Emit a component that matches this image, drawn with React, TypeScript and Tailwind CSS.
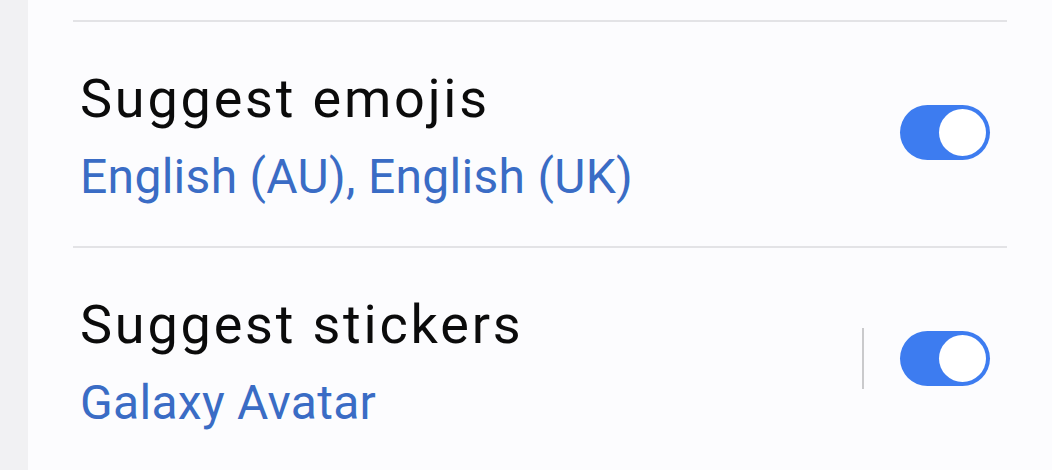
type SettingRow = {
  title: string;
  summary: string;
  enabled: boolean;
  hasAction?: boolean;
};

const rows: SettingRow[] = [
  { title: 'Suggest emojis', summary: 'English (AU), English (UK)', enabled: true },
  { title: 'Suggest stickers', summary: 'Galaxy Avatar', enabled: true, hasAction: true },
];

function Toggle({ on }: { on: boolean }) {
  return (
    <div
      className={`flex h-[55px] w-[90px] items-center rounded-full px-[4px] ${
        on ? 'justify-end bg-[#3d7cf0]' : 'justify-start bg-[#c7c7cc]'
      }`}
    >
      <span className="h-[47px] w-[47px] rounded-full bg-white" />
    </div>
  );
}

function Row({ row }: { row: SettingRow }) {
  return (
    <div className="flex h-[224px] items-start pr-[62px] pl-[52px]">
      <div className="flex min-w-0 flex-1 flex-col pt-[46px]">
        <span className="text-[54px] leading-[62px] tracking-[2.8px] text-[#0b0b0b]">{row.title}</span>
        <span className="mt-[19px] text-[48px] leading-[56px] tracking-[0.3px] text-[#3a6cc5]">
          {row.summary}
        </span>
      </div>
      <div className="mt-[80px] flex h-[61px] items-center">
        {row.hasAction && <span className="mr-[36px] h-[61px] w-[2px] bg-[#cacacc]" />}
        <Toggle on={row.enabled} />
      </div>
    </div>
  );
}

export default function App() {
  return (
    <div className="flex h-[470px] w-full overflow-hidden bg-[#f1f1f3] font-['Roboto',sans-serif]">
      <div className="w-[28px] shrink-0" />
      <div className="flex flex-1 flex-col bg-[#fcfcfe] pt-[20px]">
        {rows.map((row) => (
          <div key={row.title}>
            <div className="mr-[45px] ml-[45px] h-[2px] bg-[#e3e3e6]" />
            <Row row={row} />
          </div>
        ))}
      </div>
    </div>
  );
}
